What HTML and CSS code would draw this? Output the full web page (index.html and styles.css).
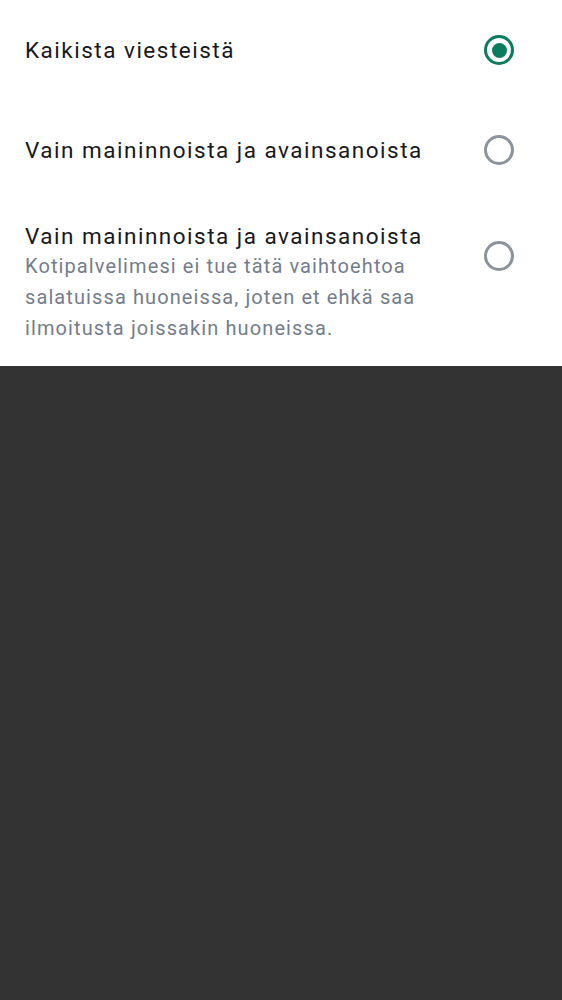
FILE: index.html
```html
<!DOCTYPE html>
<html lang="fi">
<head>
<meta charset="utf-8">
<title>Ilmoitukset</title>
<link rel="stylesheet" href="styles.css">
</head>
<body>
<div class="panel">
  <div class="row">
    <div class="texts"><div class="title">Kaikista viesteistä</div></div>
    <span class="radio checked"></span>
  </div>
  <div class="row">
    <div class="texts"><div class="title">Vain maininnoista ja avainsanoista</div></div>
    <span class="radio"></span>
  </div>
  <div class="row row-top">
    <div class="texts">
      <div class="title">Vain maininnoista ja avainsanoista</div>
      <div class="desc">Kotipalvelimesi ei tue tätä vaihtoehtoa salatuissa huoneissa, joten et ehkä saa ilmoitusta joissakin huoneissa.</div>
    </div>
    <span class="radio"></span>
  </div>
</div>
</body>
</html>
```
FILE: styles.css
```css
html, body {
  margin: 0;
  padding: 0;
  background: #333333;
  font-family: Roboto, "Noto Sans", sans-serif;
}
.panel {
  background: #ffffff;
  height: 366px;
  box-sizing: border-box;
}
.row {
  display: flex;
  align-items: center;
  padding: 35px 48px 35px 25px;
  height: 100px;
  box-sizing: border-box;
}
.row-top {
  align-items: flex-start;
  height: auto;
  padding-top: 21px;
  padding-bottom: 21px;
}
.texts {
  flex: 1;
  min-width: 0;
  padding-right: 30px;
}
.title {
  font-size: 22.5px;
  line-height: 30px;
  color: #17191c;
  letter-spacing: 1.5px;
}
.desc {
  font-size: 20px;
  line-height: 31px;
  color: #737d8c;
  letter-spacing: 1.1px;
}
.radio {
  flex: none;
  width: 30px;
  height: 30px;
  box-sizing: border-box;
  border: 3px solid #8d939c;
  border-radius: 50%;
  display: flex;
  align-items: center;
  justify-content: center;
}
.row-top .radio {
  margin-top: 20px;
}
.radio.checked {
  border-color: #0b7c5d;
}
.radio.checked::after {
  content: "";
  width: 15px;
  height: 15px;
  border-radius: 50%;
  background: #0b7c5d;
}
```
